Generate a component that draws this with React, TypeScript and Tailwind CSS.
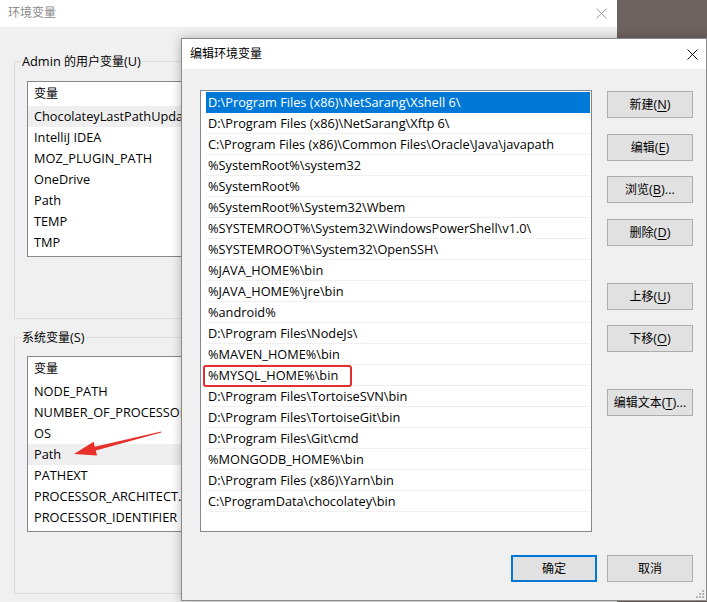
import React from 'react';

const userVars = ['ChocolateyLastPathUpdateTime', 'IntelliJ IDEA', 'MOZ_PLUGIN_PATH', 'OneDrive', 'Path', 'TEMP', 'TMP'];
const sysVars = ['NODE_PATH', 'NUMBER_OF_PROCESSORS', 'OS', 'Path', 'PATHEXT', 'PROCESSOR_ARCHITECT...', 'PROCESSOR_IDENTIFIER'];

const paths = [
  'D:\\Program Files (x86)\\NetSarang\\Xshell 6\\',
  'D:\\Program Files (x86)\\NetSarang\\Xftp 6\\',
  'C:\\Program Files (x86)\\Common Files\\Oracle\\Java\\javapath',
  '%SystemRoot%\\system32',
  '%SystemRoot%',
  '%SystemRoot%\\System32\\Wbem',
  '%SYSTEMROOT%\\System32\\WindowsPowerShell\\v1.0\\',
  '%SYSTEMROOT%\\System32\\OpenSSH\\',
  '%JAVA_HOME%\\bin',
  '%JAVA_HOME%\\jre\\bin',
  '%android%',
  'D:\\Program Files\\NodeJs\\',
  '%MAVEN_HOME%\\bin',
  '%MYSQL_HOME%\\bin',
  'D:\\Program Files\\TortoiseSVN\\bin',
  'D:\\Program Files\\TortoiseGit\\bin',
  'D:\\Program Files\\Git\\cmd',
  '%MONGODB_HOME%\\bin',
  'D:\\Program Files (x86)\\Yarn\\bin',
  'C:\\ProgramData\\chocolatey\\bin',
];

function CloseIcon({ color }: { color: string }) {
  return (
    <svg width="11" height="11" viewBox="0 0 11 11">
      <path d="M0.5 0.5 L10.5 10.5 M10.5 0.5 L0.5 10.5" stroke={color} strokeWidth="1" fill="none" />
    </svg>
  );
}

function Btn({ cjk, mn, dots, className = '' }: { cjk: string; mn?: string; dots?: boolean; className?: string }) {
  return (
    <div className={`h-[27px] flex items-center justify-center bg-[#e1e1e1] text-black leading-none ${className}`}>
      <span className="text-[12px]">{cjk}</span>
      {mn && (
        <span>
          (<span className="underline underline-offset-2">{mn}</span>){dots ? '...' : ''}
        </span>
      )}
    </div>
  );
}

function VarList({ items, hl }: { items: string[]; hl: number }) {
  return (
    <div className="w-[560px] h-[176px] border border-[#828790] bg-white overflow-hidden">
      <div className="h-[24px] flex items-center pl-[6px] text-[12px] leading-none">变量</div>
      {items.map((v, i) => (
        <div
          key={v}
          className={`h-[21px] flex items-center pl-[6px] leading-none whitespace-nowrap ${i === hl ? 'bg-[#efefef]' : ''}`}
        >
          {v}
        </div>
      ))}
    </div>
  );
}

export default function App() {
  return (
    <div className="relative w-[707px] h-[602px] overflow-hidden bg-[#6d6260] text-[12.75px] text-black font-['Open_Sans','Noto_Sans_CJK_SC',sans-serif]">
      {/* background window */}
      <div className="absolute left-0 top-0 w-[617px] h-[602px] flex flex-col bg-[#f0f0f0]">
        <div className="h-[27px] shrink-0 bg-white flex items-center justify-between pl-2 pr-[10px] pb-px">
          <span className="text-[12px] leading-none text-[#8a8a8a]">环境变量</span>
          <CloseIcon color="#9a9a9a" />
        </div>
        <div className="pl-[14px] pt-[25px] flex flex-col">
          <fieldset className="w-[590px] border border-[#dcdcdc] pl-[12px] pb-[61px]">
            <legend className="-ml-[6px] px-px leading-[18px]">
              Admin <span className="text-[12px]">的用户变量</span>(U)
            </legend>
            <div className="mt-[10px]">
              <VarList items={userVars} hl={0} />
            </div>
          </fieldset>
          <fieldset className="mt-[9px] w-[590px] border border-[#dcdcdc] pl-[12px] pb-[61px]">
            <legend className="-ml-[6px] px-px leading-[18px]">
              <span className="text-[12px]">系统变量</span>(S)
            </legend>
            <div className="mt-[9px]">
              <VarList items={sysVars} hl={3} />
            </div>
          </fieldset>
        </div>
      </div>

      {/* edit dialog */}
      <div className="absolute left-[181px] top-[38px] w-[526px] h-[563px] flex flex-col border border-[#8a8a8a] bg-[#f0f0f0] shadow-[0_0_10px_rgba(0,0,0,0.28)]">
        <div className="h-[30px] shrink-0 bg-white flex items-center justify-between pl-2 pr-[8px]">
          <span className="text-[12px] leading-none">编辑环境变量</span>
          <CloseIcon color="#111" />
        </div>
        <div className="pt-[21px] pl-[18px] pr-[13px]">
          <div className="flex">
            <div className="w-[392px] h-[442px] border border-[#828790] bg-white pl-[5px] pr-px pt-px">
              {paths.map((p, i) => (
                <div
                  key={p}
                  className={`relative h-[21px] flex items-center pl-[2px] border-b leading-none whitespace-nowrap ${
                    i === 0 ? 'bg-[#0078d7] border-[#0078d7] text-white' : 'border-[#f0f0f0]'
                  }`}
                >
                  {p}
                  {i === 13 && (
                    <span className="absolute -left-[3px] top-0 w-[149px] h-[22px] border-2 border-[#e52e2e] rounded-[3px]" />
                  )}
                </div>
              ))}
            </div>
            <div className="ml-[15px] w-[86px] pt-px flex flex-col">
              <Btn cjk="新建" mn="N" className="border border-[#adadad]" />
              <Btn cjk="编辑" mn="E" className="mt-[16px] border border-[#adadad]" />
              <Btn cjk="浏览" mn="B" dots className="mt-[15px] border border-[#adadad]" />
              <Btn cjk="删除" mn="D" className="mt-[16px] border border-[#adadad]" />
              <Btn cjk="上移" mn="U" className="mt-[37px] border border-[#adadad]" />
              <Btn cjk="下移" mn="O" className="mt-[15px] border border-[#adadad]" />
              <Btn cjk="编辑文本" mn="T" dots className="mt-[37px] border border-[#adadad]" />
            </div>
          </div>
          <div className="mt-[23px] flex justify-end gap-[10px]">
            <Btn cjk="确定" className="w-[86px] border-2 border-[#0078d7]" />
            <Btn cjk="取消" className="w-[86px] border border-[#adadad]" />
          </div>
        </div>
        <svg className="absolute right-[2px] bottom-[2px]" width="8" height="8" viewBox="0 0 8 8">
          <g fill="#b5b5b5">
            <rect x="6" y="0" width="2" height="2" />
            <rect x="3" y="3" width="2" height="2" />
            <rect x="6" y="3" width="2" height="2" />
            <rect x="0" y="6" width="2" height="2" />
            <rect x="3" y="6" width="2" height="2" />
            <rect x="6" y="6" width="2" height="2" />
          </g>
        </svg>
      </div>

      {/* red arrow annotation */}
      <svg className="absolute left-0 top-0 pointer-events-none" width="707" height="602" viewBox="0 0 707 602">
        <polygon
          points="161,431.4 94.8,446.7 93.6,441.8 74,454 97,455.4 95.8,450.5 161.3,432.6"
          fill="#e8312b"
        />
      </svg>
    </div>
  );
}
